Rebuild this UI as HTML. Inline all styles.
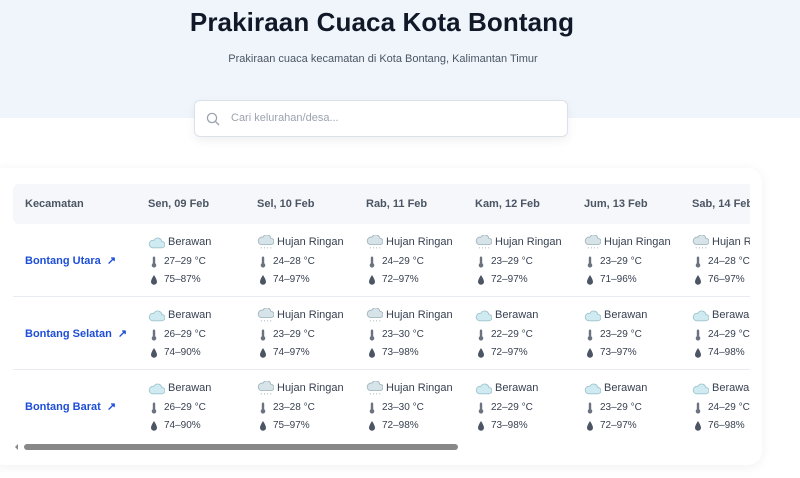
<!DOCTYPE html>
<html><head><meta charset="utf-8"><style>
*{margin:0;padding:0;box-sizing:border-box}
body{width:800px;height:478px;overflow:hidden;background:#fff;font-family:"Liberation Sans",sans-serif;position:relative;color:#374151}
.band{position:absolute;left:0;top:0;width:800px;height:118px;background:#eff5fb}
h1{position:absolute;top:7px;left:0;width:764px;text-align:center;font-size:26px;font-weight:bold;color:#111827;letter-spacing:0.1px}
.sub{position:absolute;top:53px;left:0;width:766px;text-align:center;font-size:11px;color:#4b5563}
.search{position:absolute;left:194px;top:100px;width:374px;height:37px;background:#fff;border:1px solid #dbe1e8;border-radius:6px;box-shadow:0 4px 10px rgba(0,0,0,.06)}
.search span{position:absolute;left:36px;top:11px;font-size:11px;color:#9ca3af}
.card{position:absolute;left:-10px;top:168px;width:772px;height:297px;background:#fff;border-radius:14px;box-shadow:0 2px 12px rgba(0,0,0,.06)}
.wrap{position:absolute;left:13px;top:184px;width:737px;height:272px;overflow:hidden}
.hdr{position:absolute;left:0;top:0;width:800px;height:40px;background:#f5f7fa;border-radius:6px}
.h{position:absolute;top:14px;font-size:11px;font-weight:bold;color:#4b5563;white-space:nowrap}
.line{position:absolute;left:0;width:800px;height:1px;background:#e8ebef}
.c{position:absolute;font-size:11px;color:#374151;white-space:nowrap}
.t{font-size:10px}
.k{position:absolute;font-size:11px;font-weight:bold;color:#1d4ed8;white-space:nowrap}
.sb{position:absolute;left:24px;top:444px;width:434px;height:6px;border-radius:3px;background:#888}
svg.i{position:absolute}
</style></head><body>
<div class="band"></div>
<h1>Prakiraan Cuaca Kota Bontang</h1>
<div class="sub">Prakiraan cuaca kecamatan di Kota Bontang, Kalimantan Timur</div>
<div class="search"><svg style="position:absolute;left:11px;top:11px" width="14" height="14" viewBox="0 0 14 14"><circle cx="6" cy="6" r="4.6" fill="none" stroke="#9ca3af" stroke-width="1.3"/><path d="M9.5 9.5L13 13" stroke="#9ca3af" stroke-width="1.3"/></svg><span>Cari kelurahan/desa...</span></div>
<div class="card"></div>
<svg width="0" height="0" style="position:absolute"><defs>
<symbol id="cl" viewBox="0 0 16 12"><path d="M4 11h9a3 3 0 0 0 0-6 4 4 0 0 0-7.5-1A3.5 3.5 0 0 0 4 11z" fill="#cfeaf0" stroke="#9cc3cc" stroke-width=".8"/></symbol>
<symbol id="rn" viewBox="0 0 16 14"><path d="M4 9h9a3 3 0 0 0 0-6 4 4 0 0 0-7.5-1A3.5 3.5 0 0 0 4 9z" fill="#d6e3e8" stroke="#9fb3bb" stroke-width=".8"/><path d="M4 11.5v1M7 11.5v1M10 11.5v1M13 11.5v1" stroke="#9fb3bb" stroke-width=".8"/></symbol>
<symbol id="th" viewBox="0 0 8 12"><rect x="2.8" y="0.5" width="2.4" height="7.5" rx="1.2" fill="#6b7280"/><circle cx="4" cy="9.3" r="2.3" fill="#6b7280"/></symbol>
<symbol id="dr" viewBox="0 0 8 12"><path d="M4 1C4 1 1 5.5 1 7.8a3 3 0 0 0 6 0C7 5.5 4 1 4 1z" fill="#4b5563"/></symbol>
</defs></svg>
<div class="wrap">
<div class="hdr"></div>
<div class="h" style="left:12px">Kecamatan</div>
<div class="h" style="left:135px">Sen, 09 Feb</div>
<div class="h" style="left:244px">Sel, 10 Feb</div>
<div class="h" style="left:353px">Rab, 11 Feb</div>
<div class="h" style="left:462px">Kam, 12 Feb</div>
<div class="h" style="left:571px">Jum, 13 Feb</div>
<div class="h" style="left:679px">Sab, 14 Feb</div>
<div class="line" style="top:112px"></div>
<div class="line" style="top:185px"></div>
<div class="k" style="left:12px;top:70px">Bontang Utara &nbsp;↗</div>
<div class="k" style="left:12px;top:143px">Bontang Selatan &nbsp;↗</div>
<div class="k" style="left:12px;top:216px">Bontang Barat &nbsp;↗</div>

<!-- row 1 -->
<svg class="i" style="left:135px;top:52px" width="17" height="13"><use href="#cl"/></svg><div class="c" style="left:155px;top:52px">Berawan</div>
<svg class="i" style="left:137px;top:72px" width="8" height="12"><use href="#th"/></svg><div class="c t" style="left:151px;top:72px">27–29 °C</div>
<svg class="i" style="left:137px;top:90px" width="8" height="12"><use href="#dr"/></svg><div class="c t" style="left:151px;top:90px">75–87%</div>
<svg class="i" style="left:244px;top:51px" width="17" height="15"><use href="#rn"/></svg><div class="c" style="left:264px;top:52px">Hujan Ringan</div>
<svg class="i" style="left:246px;top:72px" width="8" height="12"><use href="#th"/></svg><div class="c t" style="left:260px;top:72px">24–28 °C</div>
<svg class="i" style="left:246px;top:90px" width="8" height="12"><use href="#dr"/></svg><div class="c t" style="left:260px;top:90px">74–97%</div>
<svg class="i" style="left:353px;top:51px" width="17" height="15"><use href="#rn"/></svg><div class="c" style="left:373px;top:52px">Hujan Ringan</div>
<svg class="i" style="left:355px;top:72px" width="8" height="12"><use href="#th"/></svg><div class="c t" style="left:369px;top:72px">24–29 °C</div>
<svg class="i" style="left:355px;top:90px" width="8" height="12"><use href="#dr"/></svg><div class="c t" style="left:369px;top:90px">72–97%</div>
<svg class="i" style="left:462px;top:51px" width="17" height="15"><use href="#rn"/></svg><div class="c" style="left:482px;top:52px">Hujan Ringan</div>
<svg class="i" style="left:464px;top:72px" width="8" height="12"><use href="#th"/></svg><div class="c t" style="left:478px;top:72px">23–29 °C</div>
<svg class="i" style="left:464px;top:90px" width="8" height="12"><use href="#dr"/></svg><div class="c t" style="left:478px;top:90px">72–97%</div>
<svg class="i" style="left:571px;top:51px" width="17" height="15"><use href="#rn"/></svg><div class="c" style="left:591px;top:52px">Hujan Ringan</div>
<svg class="i" style="left:573px;top:72px" width="8" height="12"><use href="#th"/></svg><div class="c t" style="left:587px;top:72px">23–29 °C</div>
<svg class="i" style="left:573px;top:90px" width="8" height="12"><use href="#dr"/></svg><div class="c t" style="left:587px;top:90px">71–96%</div>
<svg class="i" style="left:679px;top:51px" width="17" height="15"><use href="#rn"/></svg><div class="c" style="left:699px;top:52px">Hujan Ringan</div>
<svg class="i" style="left:681px;top:72px" width="8" height="12"><use href="#th"/></svg><div class="c t" style="left:695px;top:72px">24–28 °C</div>
<svg class="i" style="left:681px;top:90px" width="8" height="12"><use href="#dr"/></svg><div class="c t" style="left:695px;top:90px">76–97%</div>

<!-- row 2 -->
<svg class="i" style="left:135px;top:125px" width="17" height="13"><use href="#cl"/></svg><div class="c" style="left:155px;top:125px">Berawan</div>
<svg class="i" style="left:137px;top:145px" width="8" height="12"><use href="#th"/></svg><div class="c t" style="left:151px;top:145px">26–29 °C</div>
<svg class="i" style="left:137px;top:163px" width="8" height="12"><use href="#dr"/></svg><div class="c t" style="left:151px;top:163px">74–90%</div>
<svg class="i" style="left:244px;top:124px" width="17" height="15"><use href="#rn"/></svg><div class="c" style="left:264px;top:125px">Hujan Ringan</div>
<svg class="i" style="left:246px;top:145px" width="8" height="12"><use href="#th"/></svg><div class="c t" style="left:260px;top:145px">23–29 °C</div>
<svg class="i" style="left:246px;top:163px" width="8" height="12"><use href="#dr"/></svg><div class="c t" style="left:260px;top:163px">74–97%</div>
<svg class="i" style="left:353px;top:124px" width="17" height="15"><use href="#rn"/></svg><div class="c" style="left:373px;top:125px">Hujan Ringan</div>
<svg class="i" style="left:355px;top:145px" width="8" height="12"><use href="#th"/></svg><div class="c t" style="left:369px;top:145px">23–30 °C</div>
<svg class="i" style="left:355px;top:163px" width="8" height="12"><use href="#dr"/></svg><div class="c t" style="left:369px;top:163px">73–98%</div>
<svg class="i" style="left:462px;top:125px" width="17" height="13"><use href="#cl"/></svg><div class="c" style="left:482px;top:125px">Berawan</div>
<svg class="i" style="left:464px;top:145px" width="8" height="12"><use href="#th"/></svg><div class="c t" style="left:478px;top:145px">22–29 °C</div>
<svg class="i" style="left:464px;top:163px" width="8" height="12"><use href="#dr"/></svg><div class="c t" style="left:478px;top:163px">72–97%</div>
<svg class="i" style="left:571px;top:125px" width="17" height="13"><use href="#cl"/></svg><div class="c" style="left:591px;top:125px">Berawan</div>
<svg class="i" style="left:573px;top:145px" width="8" height="12"><use href="#th"/></svg><div class="c t" style="left:587px;top:145px">23–29 °C</div>
<svg class="i" style="left:573px;top:163px" width="8" height="12"><use href="#dr"/></svg><div class="c t" style="left:587px;top:163px">73–97%</div>
<svg class="i" style="left:679px;top:125px" width="17" height="13"><use href="#cl"/></svg><div class="c" style="left:699px;top:125px">Berawan</div>
<svg class="i" style="left:681px;top:145px" width="8" height="12"><use href="#th"/></svg><div class="c t" style="left:695px;top:145px">24–29 °C</div>
<svg class="i" style="left:681px;top:163px" width="8" height="12"><use href="#dr"/></svg><div class="c t" style="left:695px;top:163px">74–98%</div>

<!-- row 3 -->
<svg class="i" style="left:135px;top:198px" width="17" height="13"><use href="#cl"/></svg><div class="c" style="left:155px;top:198px">Berawan</div>
<svg class="i" style="left:137px;top:218px" width="8" height="12"><use href="#th"/></svg><div class="c t" style="left:151px;top:218px">26–29 °C</div>
<svg class="i" style="left:137px;top:236px" width="8" height="12"><use href="#dr"/></svg><div class="c t" style="left:151px;top:236px">74–90%</div>
<svg class="i" style="left:244px;top:197px" width="17" height="15"><use href="#rn"/></svg><div class="c" style="left:264px;top:198px">Hujan Ringan</div>
<svg class="i" style="left:246px;top:218px" width="8" height="12"><use href="#th"/></svg><div class="c t" style="left:260px;top:218px">23–28 °C</div>
<svg class="i" style="left:246px;top:236px" width="8" height="12"><use href="#dr"/></svg><div class="c t" style="left:260px;top:236px">75–97%</div>
<svg class="i" style="left:353px;top:197px" width="17" height="15"><use href="#rn"/></svg><div class="c" style="left:373px;top:198px">Hujan Ringan</div>
<svg class="i" style="left:355px;top:218px" width="8" height="12"><use href="#th"/></svg><div class="c t" style="left:369px;top:218px">23–30 °C</div>
<svg class="i" style="left:355px;top:236px" width="8" height="12"><use href="#dr"/></svg><div class="c t" style="left:369px;top:236px">72–98%</div>
<svg class="i" style="left:462px;top:198px" width="17" height="13"><use href="#cl"/></svg><div class="c" style="left:482px;top:198px">Berawan</div>
<svg class="i" style="left:464px;top:218px" width="8" height="12"><use href="#th"/></svg><div class="c t" style="left:478px;top:218px">22–29 °C</div>
<svg class="i" style="left:464px;top:236px" width="8" height="12"><use href="#dr"/></svg><div class="c t" style="left:478px;top:236px">73–98%</div>
<svg class="i" style="left:571px;top:198px" width="17" height="13"><use href="#cl"/></svg><div class="c" style="left:591px;top:198px">Berawan</div>
<svg class="i" style="left:573px;top:218px" width="8" height="12"><use href="#th"/></svg><div class="c t" style="left:587px;top:218px">23–29 °C</div>
<svg class="i" style="left:573px;top:236px" width="8" height="12"><use href="#dr"/></svg><div class="c t" style="left:587px;top:236px">72–97%</div>
<svg class="i" style="left:679px;top:198px" width="17" height="13"><use href="#cl"/></svg><div class="c" style="left:699px;top:198px">Berawan</div>
<svg class="i" style="left:681px;top:218px" width="8" height="12"><use href="#th"/></svg><div class="c t" style="left:695px;top:218px">24–29 °C</div>
<svg class="i" style="left:681px;top:236px" width="8" height="12"><use href="#dr"/></svg><div class="c t" style="left:695px;top:236px">76–98%</div>
</div>
<div style="position:absolute;left:15px;top:444px;width:0;height:0;border-top:3px solid transparent;border-bottom:3px solid transparent;border-right:3px solid #888"></div>
<div class="sb"></div>
</body></html>
